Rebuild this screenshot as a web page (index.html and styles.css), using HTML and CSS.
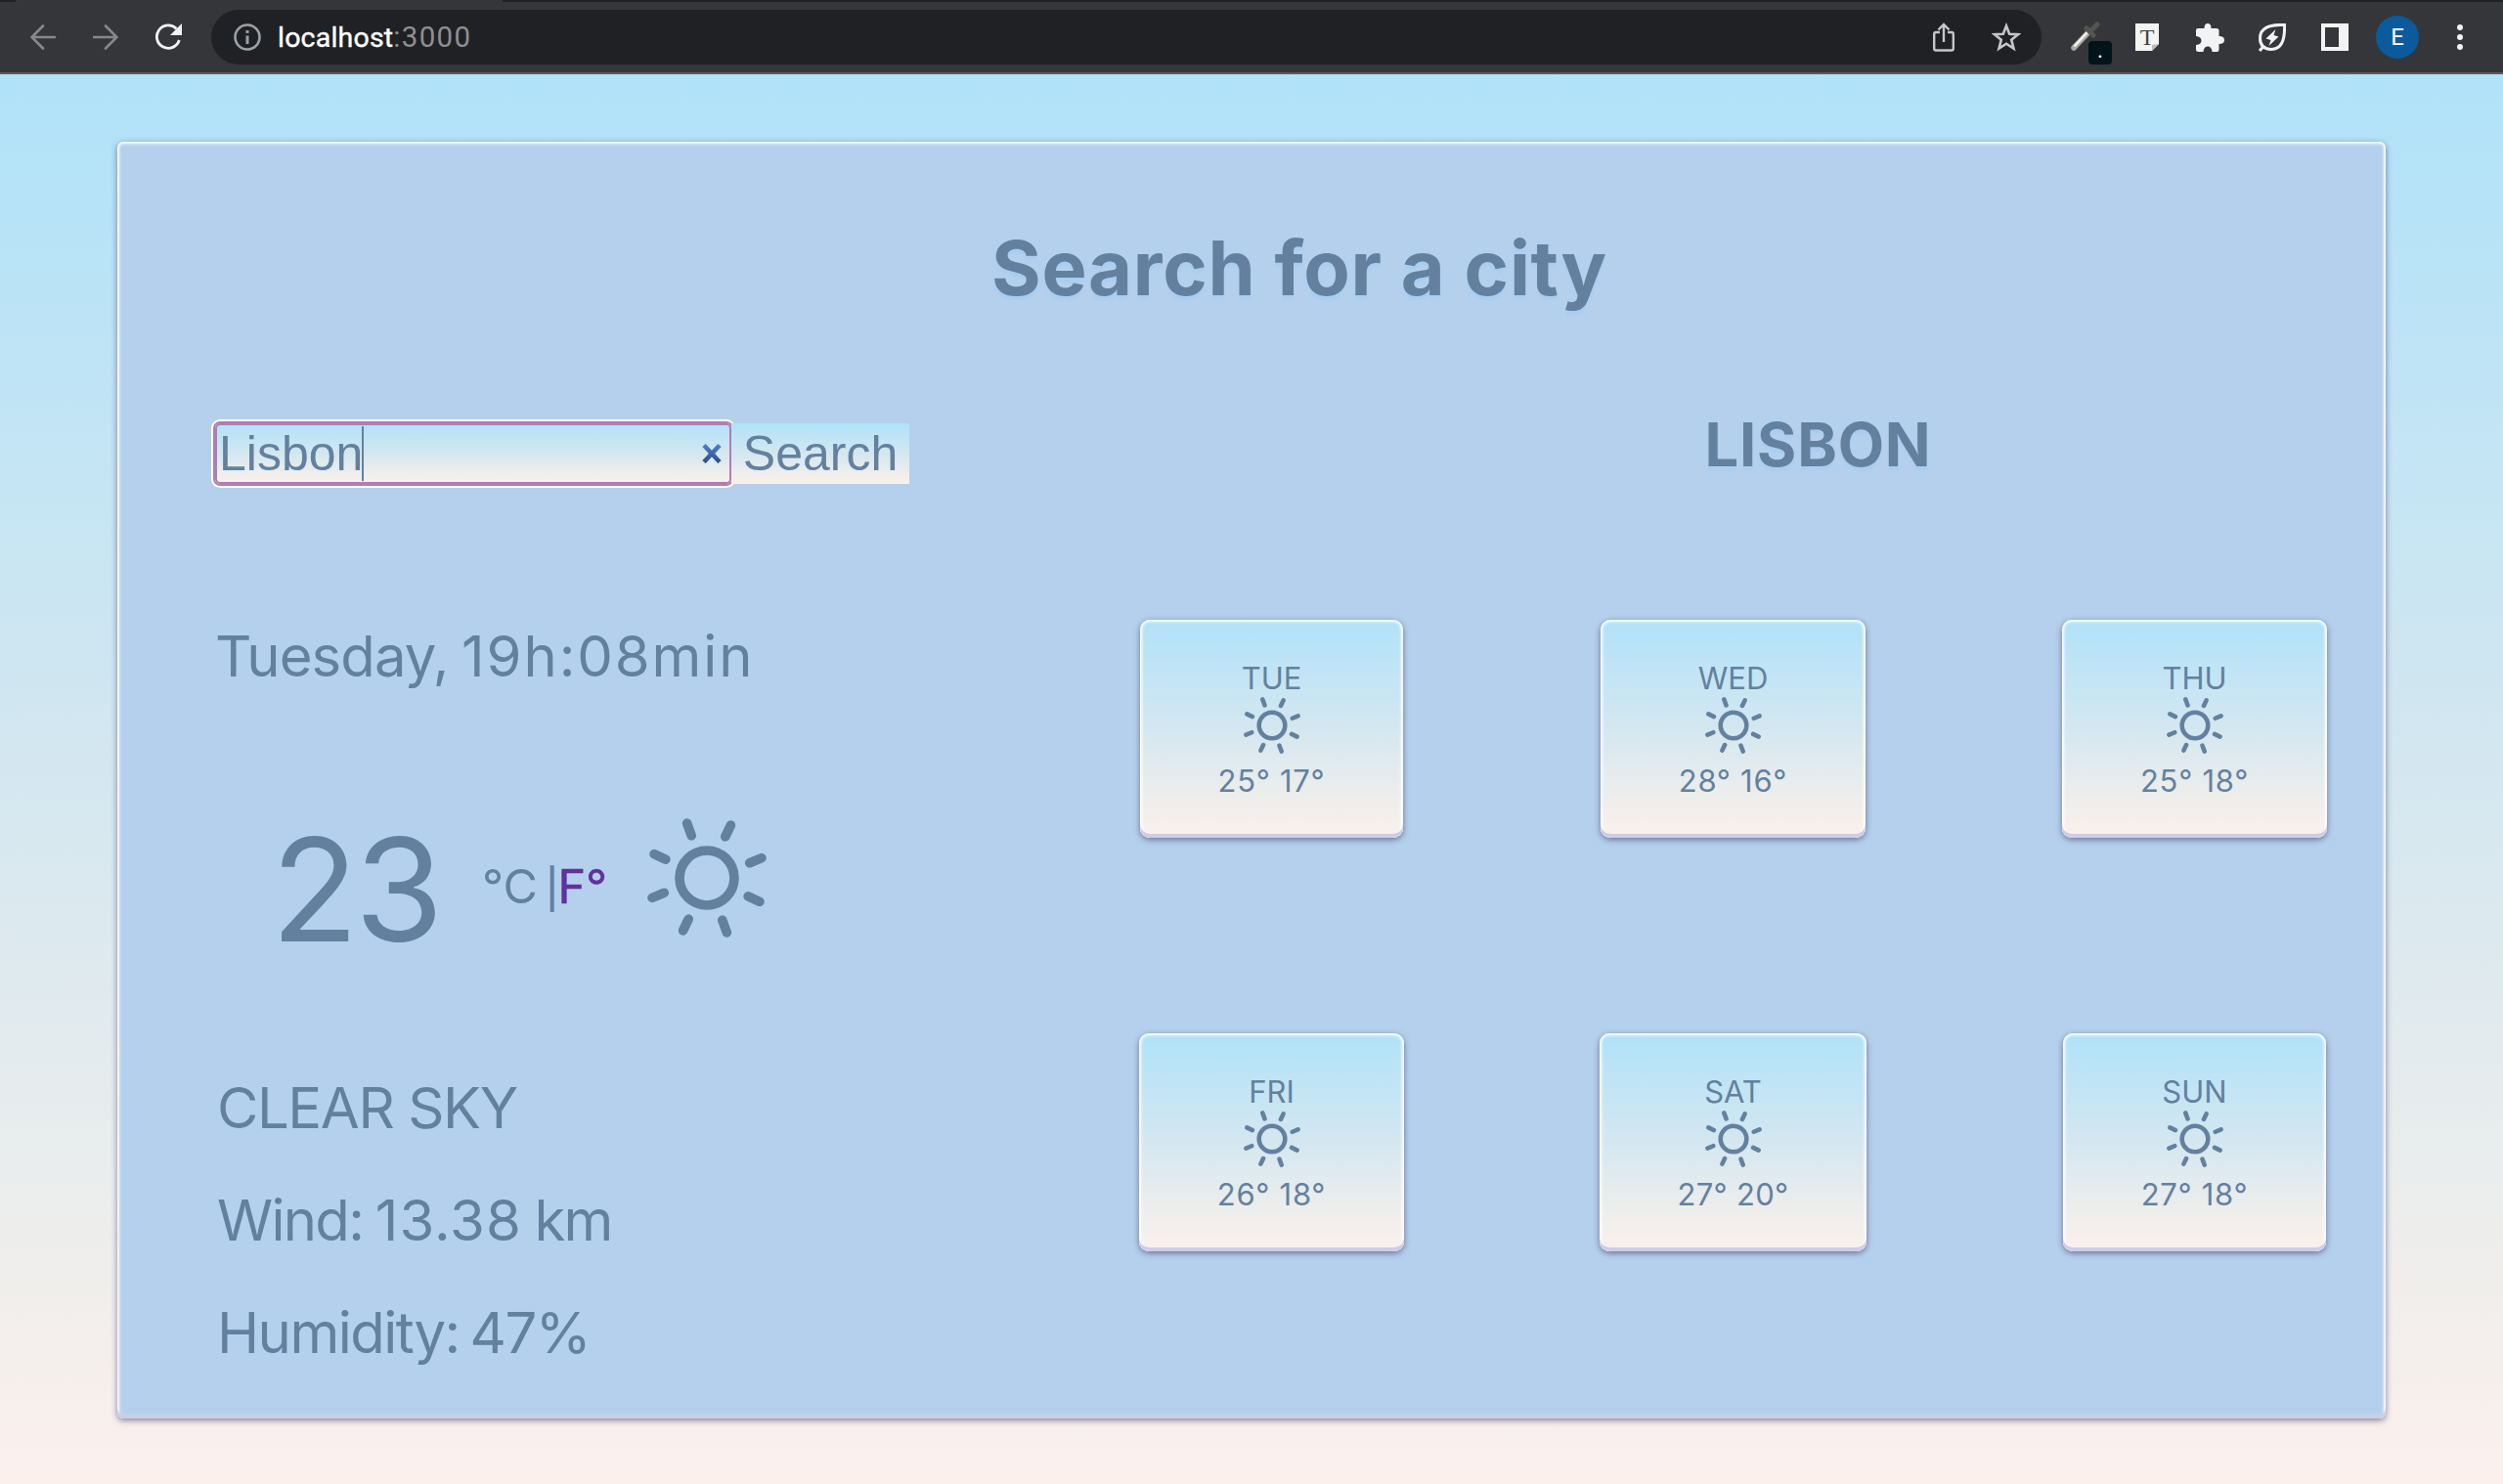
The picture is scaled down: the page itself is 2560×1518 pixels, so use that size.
FILE: index.html
```
<!DOCTYPE html>
<html lang="en">
<head>
<meta charset="utf-8">
<title>Weather</title>
<link rel="stylesheet" href="styles.css">
</head>
<body>
<svg class="defs" width="0" height="0">
  <symbol id="sun" viewBox="-60 -60 120 120">
    <circle r="27.5" fill="none" stroke="currentColor" stroke-width="9.5"/>
    <g stroke="currentColor" stroke-width="9.5" stroke-linecap="round">
      <path d="M-20-55L-15.500-42.500M24-53L18.500-41.500M55-20L43-15M53 24L41.500 18.500M20 55L15.500 42.500M-24 53L-18.500 41.500M-55 20L-43 15M-53-24L-41.500-18.500"/>
    </g>
  </symbol>
</svg>
<header class="toolbar">
  <svg class="nav back" viewBox="0 0 26 26"><path d="M25 13H2M13 1.500L1.500 13L13 24.500"/></svg>
  <svg class="nav forward" viewBox="0 0 26 26"><path d="M1 13H24M13 1.500L24.500 13L13 24.500"/></svg>
  <svg class="reload" viewBox="0 0 28 28"><path d="M22.500 5.500A11.700 11.700 0 1 0 25.300 17" fill="none" stroke="#f1f3f4" stroke-width="2.800"/><path d="M28 0V12H16Z" fill="#f1f3f4"/></svg>
  <div class="address">
    <svg class="info" viewBox="0 0 28 28"><circle cx="14" cy="14" r="12.500" fill="none" stroke="#9aa0a6" stroke-width="2.600"/><path d="M14 7V10M14 12.500V21" stroke="#9aa0a6" stroke-width="3"/></svg>
    <span class="url">localhost<span class="port">:3000</span></span>
    <svg class="share" viewBox="0 0 22 30"><path d="M7 10H3Q1.200 10 1.200 12V26.500Q1.200 28.500 3 28.500H19Q20.800 28.500 20.800 26.500V12Q20.800 10 19 10H15M11 20V2M5.500 7.500L11 2L16.500 7.500"/></svg>
    <svg class="star" viewBox="0 0 30 30"><path d="M15 3.500L18.200 11.700L27 12.200L20.200 17.700L22.500 26.500L15 21.700L7.500 26.500L9.800 17.700L3 12.200L11.800 11.700Z"/></svg>
  </div>
  <div class="picker">
    <svg viewBox="0 0 32 30"><path d="M3 27L18 11" stroke="#a9a9a4" stroke-width="5.500" stroke-linecap="round"/><path d="M3.500 25.500L17 11" stroke="#f5f5f0" stroke-width="2.500"/><path d="M16 7L23 14M20 10L27 3" stroke="#55554f" stroke-width="5" stroke-linecap="round"/></svg>
    <span class="badge">.</span>
  </div>
  <svg class="type" viewBox="0 0 24 28"><path d="M0 0H24V21L17 28H0Z" fill="#f4f4f2"/><path d="M24 21L17 28V22Z" fill="#bbb"/><text x="12" y="21.500" text-anchor="middle">T</text></svg>
  <svg class="puzzle" viewBox="0 0 29 29"><path d="M2 5H8.500Q8.500 0 12 0T15.500 5H21Q23.500 5 23.500 7.500V13Q29 13 29 17T23.500 21V26.500Q23.500 29 21 29H16.500Q16 23.500 12 23.500T7.500 29H2.500Q0 29 0 26.500V22Q5.500 21.500 5.500 17.500T0 13V7Q0 5 2 5Z"/></svg>
  <svg class="leaf" viewBox="0 0 28 29"><path d="M26.500 1.500Q1.500 .500 1.500 15Q1.500 26 13 26.500Q27.500 26.500 26.500 1.500ZM5.500 23L1 28"/><path d="M17.500 6L7.500 15.500L12.500 17L10.500 23L20.500 13.500L15.500 12Z" fill="#f1f3f4" stroke="none"/></svg>
  <svg class="side" viewBox="0 0 28 28"><path d="M0 0H28V28H0ZM4 4V24H18V4Z" fill-rule="evenodd"/></svg>
  <span class="avatar">E</span>
  <svg class="dots" viewBox="0 0 6 26"><circle cx="3" cy="3" r="3"/><circle cx="3" cy="13" r="3"/><circle cx="3" cy="23" r="3"/></svg>
</header>
<main class="panel">
  <h1 class="title">Search for a city</h1>
  <div class="columns">
    <section class="current">
      <form class="search">
        <div class="field"><span class="value">Lisbon</span><i class="caret"></i><svg class="clear" viewBox="0 0 20 20"><defs><linearGradient id="cross" x1="0" y1="0" x2="0" y2="20" gradientUnits="userSpaceOnUse"><stop stop-color="#4c84cc"/><stop offset="1" stop-color="#314a80"/></linearGradient></defs><path d="M2 1.500L18 18.500M18 1.500L2 18.500" stroke="url(#cross)" stroke-width="4.600"/></svg></div>
        <button class="submit" type="button">Search</button>
      </form>
      <p class="line date"><span class="day">Tuesday, </span><span class="time">19h:08min</span></p>
      <div class="now">
        <span class="temp">23</span>
        <span class="units">°C <i>|</i><b>F°</b></span>
        <svg class="sun-big"><use href="#sun"/></svg>
      </div>
      <p class="line sky">CLEAR SKY</p>
      <p class="line wind">Wind: <span>13.38</span> km</p>
      <p class="line humidity">Humidity: 47%</p>
    </section>
    <section class="forecast">
      <h2 class="city">LISBON</h2>
      <div class="days">
        <article class="card"><span>TUE</span><svg><use href="#sun"/></svg><span class="range">25° 17°</span></article>
        <article class="card wide"><span>WED</span><svg><use href="#sun"/></svg><span class="range">28° 16°</span></article>
        <article class="card wide"><span>THU</span><svg><use href="#sun"/></svg><span class="range">25° 18°</span></article>
        <article class="card wide"><span>FRI</span><svg><use href="#sun"/></svg><span class="range">26° 18°</span></article>
        <article class="card widest"><span>SAT</span><svg><use href="#sun"/></svg><span class="range">27° 20°</span></article>
        <article class="card"><span>SUN</span><svg><use href="#sun"/></svg><span class="range">27° 18°</span></article>
      </div>
    </section>
  </div>
</main>
</body>
</html>
```
FILE: styles.css
```
* { box-sizing: border-box; }

body {
  margin: 0;
  height: 1518px;
  overflow: hidden;
  display: flex;
  flex-direction: column;
  font-family: Inter, "Liberation Sans", sans-serif;
  color: #63819f;
  background: linear-gradient(#b0e2f9 76px, #d4e7f0 52%, #eeeeec 84%, #fbf0ec 100%);
}

h1, h2, p { margin: 0; }
svg { display: block; flex: none; }
.defs { position: absolute; }

.toolbar {
  flex: none;
  height: 76px;
  padding-top: 2px;
  display: flex;
  align-items: center;
  background: linear-gradient(90deg, #202124 16px, #35363a 16px 514px, #202124 514px) 0 0 / 100% 2px no-repeat #35363a;
  border-bottom: 2px solid #5b5c60;
}

.nav { width: 26px; height: 26px; fill: none; stroke: #87888b; stroke-width: 2.6; stroke-linecap: round; }
.back { margin-left: 31px; }
.forward { margin-left: 38px; }
.reload { width: 28px; height: 28px; margin-left: 37px; }

.address {
  width: 1872px;
  height: 56px;
  margin-left: 30px;
  padding: 0 21px 0 23px;
  display: flex;
  align-items: center;
  border-radius: 28px;
  background: #202124;
}
.info { width: 28px; height: 28px; }
.url { flex: 1; margin-left: 17px; font: 28.500px/58px Roboto, sans-serif; letter-spacing: 0.2px; color: #fff; -webkit-text-stroke: 0.400px; }
.port { font-size: 29.500px; letter-spacing: 1.300px; color: #8e8f91; -webkit-text-stroke: 0; }
.share { width: 22px; height: 30px; fill: none; stroke: #c5c6c8; stroke-width: 2.400; }
.star { width: 30px; height: 30px; margin-left: 38px; fill: none; stroke: #c5c6c8; stroke-width: 2.600; }

.picker { position: relative; width: 42px; height: 52px; margin-left: 30px; padding-top: 10px; }
.picker svg { width: 32px; height: 30px; }
.badge {
  position: absolute;
  left: 18px;
  top: 30px;
  width: 24px;
  height: 24px;
  border-radius: 4px;
  background: #00141a;
  color: #fff;
  font: 20px/20px Inter, sans-serif;
  text-align: center;
}
.type { width: 24px; height: 28px; margin-left: 24px; overflow: visible; }
.type text { font: 24px "Liberation Serif", serif; fill: #444; }
.leaf, .side { width: 28px; height: 28px; fill: #f1f3f4; }
.puzzle { width: 29px; height: 29px; margin-left: 38px; fill: #f1f3f4; }
.leaf { height: 29px; margin-left: 35px; fill: none; stroke: #f1f3f4; stroke-width: 3; }
.side { margin-left: 36px; }
.avatar { width: 44px; height: 44px; margin-left: 28px; border-radius: 50%; background: #0b5a9c; color: #fff; font: 24px/44px Roboto, sans-serif; text-align: center; }
.dots { width: 6px; height: 26px; margin-left: 39px; fill: #f1f3f4; }

.panel {
  width: 2320px;
  height: 1306px;
  margin: 69px 0 0 120px;
  border-radius: 6px;
  background: #b5d0ed;
  box-shadow: inset 0 -4px 0 #cecde7, inset 0 0 3px 2px #fff, 0 2px 6px rgba(45, 35, 86, .55);
}
.title { height: 256px; padding: 80px 0 0 894px; font-size: 77.500px; line-height: 98px; letter-spacing: .700px; text-shadow: 0 4px 3px #a9cdf0; white-space: nowrap; }
.columns { display: grid; grid-template-columns: 1044px 1fr; }

.current { padding: 32px 0 0 98px; display: flex; flex-direction: column; }
.search { height: 62px; padding-left: 2px; display: flex; font: 50px "Liberation Sans", Arial, sans-serif; }
.field {
  width: 528px;
  height: 62px;
  padding: 0 10px 0 4px;
  display: flex;
  align-items: center;
  border-radius: 5px;
  background: linear-gradient(#b0e2f9, #d4e7f0 50%, #eeeeec 82%, #fbf0ec);
  box-shadow: inset 0 0 0 2px #b07db5, 0 0 0 2px #b07db5, 0 0 0 4px #fff;
}
.caret { width: 2px; height: 56px; margin-left: -1px; background: #63819f; }
.clear { width: 20px; height: 20px; margin-left: auto; }
.submit { z-index: 1; width: 182px; padding: 0; border: 0; font: inherit; color: inherit; background: linear-gradient(#b0e2f9, #d4e7f0 50%, #eeeeec 82%, #fbf0ec); }

.line { height: 115px; padding-left: 4px; font-size: 58px; line-height: 115px; white-space: nowrap; }
.date { margin-top: 119px; padding-left: 2px; }
.day { letter-spacing: -.900px; word-spacing: -2px; }
.time { letter-spacing: 1.900px; }
.now { height: 232px; margin: 61px 0 54px 60px; display: flex; align-items: center; }
.temp { width: 215px; padding-top: 7px; font-size: 147px; line-height: 180px; letter-spacing: -4px; text-indent: -1px; }
.units { width: 169px; font-size: 48.500px; word-spacing: -6px; white-space: nowrap; }
.units i { font-size: 40px; font-style: normal; font-weight: 500; }
.units b { margin-left: -1px; font-weight: 400; color: #60329b; -webkit-text-stroke: .500px; }
.sun-big { width: 122px; height: 122px; margin-bottom: 16px; }
.sky { letter-spacing: -1.400px; }
.wind { letter-spacing: -1.700px; word-spacing: -2px; }
.wind span { letter-spacing: 1px; }
.humidity { letter-spacing: -1.500px; word-spacing: -4px; }

.city { height: 126px; padding-left: 115px; font-size: 61.500px; line-height: 108px; letter-spacing: .800px; text-align: center; text-shadow: 0 4px 3px #a9cdf0; }
.days { padding-top: 107px; display: grid; grid-template-columns: repeat(3, 273px); justify-items: center; column-gap: 199px; row-gap: 200px; }
.card {
  width: 269px;
  height: 223px;
  padding-top: 41px;
  display: flex;
  flex-direction: column;
  align-items: center;
  border-radius: 10px;
  font-size: 31px;
  line-height: 38px;
  background: linear-gradient(#b0e2f9, #d4e7f0 50%, #eeeeec 82%, #fbf0ec);
  box-shadow: inset 0 -4px 0 #cecde7, inset 0 0 3px 2px #fff, 0 2px 6px rgba(45, 35, 86, .55);
}
.wide { width: 271px; }
.widest { width: 273px; }
.card svg { width: 58px; height: 58px; }
.range { margin-top: 9px; letter-spacing: .700px; }
.widest .range { letter-spacing: .300px; }
```
